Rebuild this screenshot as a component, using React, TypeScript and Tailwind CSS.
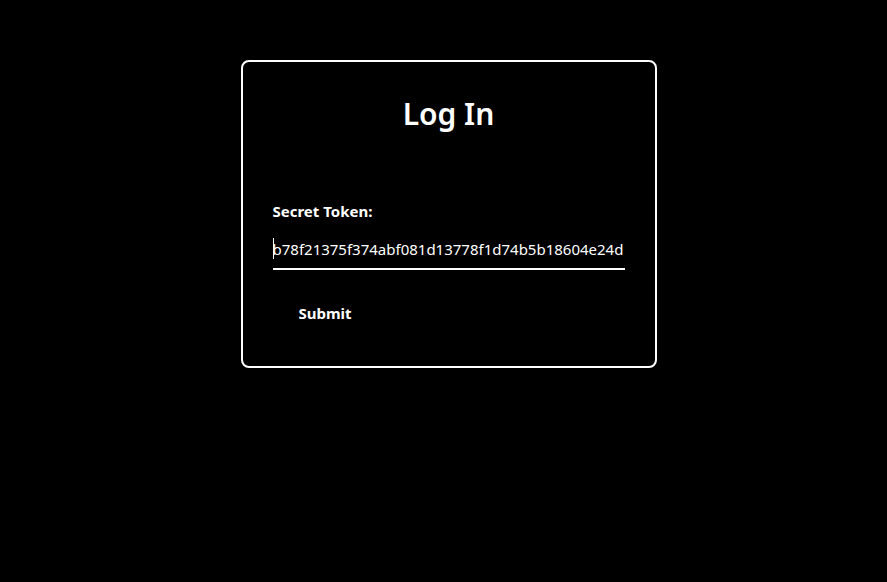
import React from "react";

const font = { fontFamily: '"Segoe UI", "Noto Sans", "Open Sans", sans-serif' };

export default function App() {
  return (
    <div className="min-h-[582px] w-full bg-black text-white" style={font}>
      <div className="flex justify-center pl-[10px] pt-[60px]">
        <form
          className="flex w-[416px] flex-col rounded-[8px] border-2 border-white px-[30px] pb-[42px] pt-[30px]"
          onSubmit={(e) => e.preventDefault()}
        >
          <h1 className="text-center text-[30px] font-semibold leading-[44px]">Log In</h1>

          <label className="mt-[65px] text-[15px] font-bold leading-[20px]">Secret Token:</label>

          <div className="relative mt-[16px] border-b-2 border-white">
            <input
              type="text"
              defaultValue="b78f21375f374abf081d13778f1d74b5b18604e24d"
              className="w-full bg-transparent pb-[8px] text-[15px] leading-[22px] text-white outline-none"
            />
            <span className="absolute left-0 top-[1px] h-[21px] w-px bg-white" />
          </div>

          <button
            type="submit"
            className="mt-[32px] self-start pl-[26px] text-[15px] font-bold leading-[22px]"
          >
            Submit
          </button>
        </form>
      </div>
    </div>
  );
}
